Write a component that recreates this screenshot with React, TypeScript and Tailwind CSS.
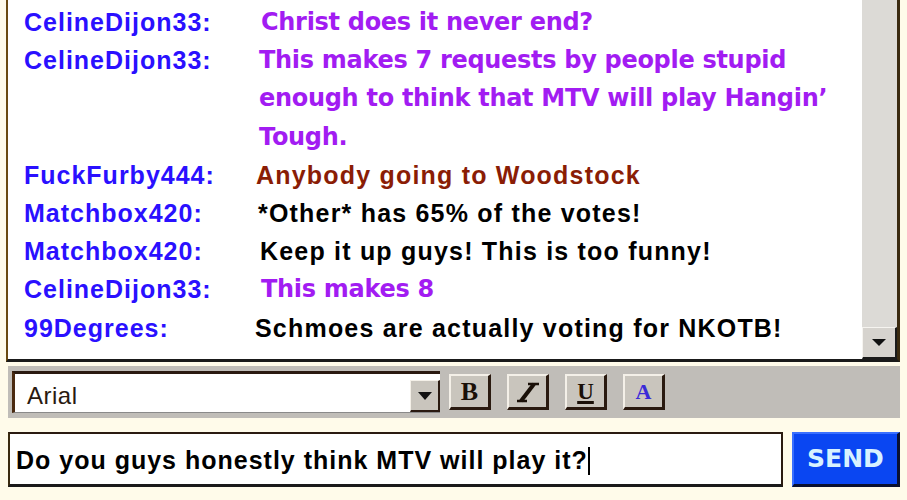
import React from "react";

type Line = { name: string; text: string[]; color: string; comic?: boolean; x: number };

const lines: Line[] = [
  { name: "CelineDijon33:", text: ["Christ does it never end?"], color: "text-[#a21cf2]", comic: true, x: 261 },
  {
    name: "CelineDijon33:",
    text: ["This makes 7 requests by people stupid", "enough to think that MTV will play Hangin’", "Tough."],
    color: "text-[#a21cf2]",
    comic: true,
    x: 259,
  },
  { name: "FuckFurby444:", text: ["Anybody going to Woodstock"], color: "text-[#8a1d05]", x: 256 },
  { name: "Matchbox420:", text: ["*Other* has 65% of the votes!"], color: "text-black", x: 258 },
  { name: "Matchbox420:", text: ["Keep it up guys! This is too funny!"], color: "text-black", x: 260 },
  { name: "CelineDijon33:", text: ["This makes 8"], color: "text-[#a21cf2]", comic: true, x: 261 },
  { name: "99Degrees:", text: ["Schmoes are actually voting for NKOTB!"], color: "text-black", x: 255 },
];

const arial = "font-['Liberation_Sans',Arial,sans-serif]";
const comic = "font-['Comic_Sans_MS','DejaVu_Sans',sans-serif]";

function FmtButton({ children }: { children: React.ReactNode }) {
  return (
    <div className="w-[42px] h-[36px] bg-[#c9c5bd] border-t-2 border-l-2 border-t-[#f4f0e8] border-l-[#f4f0e8] border-b-[3px] border-r-[3px] border-b-[#2a1a10] border-r-[#2a1a10] flex items-center justify-center">
      {children}
    </div>
  );
}

export default function App() {
  return (
    <div className="w-[907px] h-[500px] bg-[#fffbea] flex flex-col overflow-hidden">
      {/* chat window */}
      <div className="h-[362px] ml-[6px] mr-[7px] flex border-l-2 border-b-[3px] border-r-[3px] border-l-[#6b4a10] border-b-[#1a1a1a] border-r-[#3a2a10] bg-white">
        <div className="flex-1 pt-[3px] overflow-hidden">
          {lines.map((l, i) => (
            <div key={i} className="flex">
              <div
                className={`${arial} font-bold text-[#2a10ff] text-[25px] leading-[38.2px] pl-[16px] shrink-0 tracking-[1px]`}
                style={{ width: l.x - 8 }}
              >
                {l.name}
              </div>
              <div
                className={`${l.color} ${
                  l.comic
                    ? comic + " font-bold text-[24px] tracking-[-0.3px]"
                    : arial + " font-bold text-[25px] tracking-[1.2px]"
                } leading-[38.2px]`}
              >
                {l.text.map((t, j) => (
                  <div key={j} className="whitespace-nowrap">
                    {t}
                  </div>
                ))}
              </div>
            </div>
          ))}
        </div>
        <div className="w-[35px] bg-[#dcdad6] flex flex-col justify-end">
          <div className="h-[32px] bg-[#d6d3ce] border-t border-l border-t-[#f6f4f0] border-l-[#f6f4f0] border-b-2 border-r-2 border-b-[#1a1a1a] border-r-[#1a1a1a] flex items-center justify-center">
            <svg width="16" height="9" viewBox="0 0 16 9">
              <path d="M1 1 H15 L8 8 Z" fill="#111" />
            </svg>
          </div>
        </div>
      </div>

      {/* toolbar */}
      <div className="h-[52px] ml-[8px] mr-[7px] mt-[4px] bg-[#c0bdb8] flex items-center pl-[4px] gap-[9px]">
        <div className="w-[428px] h-[42px] bg-white border-t-[3px] border-l-[3px] border-t-[#2a1a10] border-l-[#4a2a10] border-b border-b-[#8a8a8a] flex items-center justify-between">
          <span className={`${arial} text-[24px] text-[#2a1a10] pl-[12px] pt-[6px] tracking-[0.5px]`}>Arial</span>
          <div className="w-[30px] h-[32px] self-end bg-[#c9c5bd] border-t border-l border-t-[#f4f0e8] border-l-[#f4f0e8] border-b-2 border-r-2 border-b-[#2a1a10] border-r-[#2a1a10] flex items-center justify-center">
            <svg width="14" height="8" viewBox="0 0 14 8">
              <path d="M0 0 H14 L7 8 Z" fill="#111" />
            </svg>
          </div>
        </div>
        <div className="flex gap-[16px]">
          <FmtButton>
            <span className="font-['Liberation_Serif',serif] font-bold text-[26px] leading-none text-[#1a1008]">B</span>
          </FmtButton>
          <FmtButton>
            <svg width="24" height="22" viewBox="0 0 24 22">
              <path d="M5 20 L18 3" stroke="#1a1008" strokeWidth="4" />
              <path d="M12 3 H23 M1 20 H11" stroke="#1a1008" strokeWidth="2.5" />
            </svg>
          </FmtButton>
          <FmtButton>
            <span className="font-['Liberation_Serif',serif] font-bold text-[23px] leading-none text-[#1a1008] underline decoration-[3px] underline-offset-[2px]">
              U
            </span>
          </FmtButton>
          <FmtButton>
            <span className="font-['Liberation_Serif',serif] font-bold text-[22px] leading-none text-[#3a2ad8]">A</span>
          </FmtButton>
        </div>
      </div>

      {/* input row */}
      <div className="flex mt-[14px] ml-[8px] mr-[7px] gap-[9px]">
        <div className="w-[775px] h-[55px] bg-white border-t-2 border-l-2 border-b-[3px] border-r-2 border-t-[#2a1a10] border-l-[#3a2a10] border-b-[#1a1a1a] border-r-[#2a1a10] flex items-center pl-[6px]">
          <span className={`${arial} font-bold text-[25px] text-black tracking-[1px] pt-[4px]`}>
            Do you guys honestly think MTV will play it?
          </span>
          <span className="w-[2px] h-[28px] bg-black ml-[0px] mt-[4px]" />
        </div>
        <div className="w-[108px] h-[55px] bg-[#0a46f2] border-t-2 border-l-2 border-t-[#3a70ff] border-l-[#3a70ff] border-b-[3px] border-r-[3px] border-b-[#0a1030] border-r-[#0a1030] flex items-center justify-center">
          <span className="font-['DejaVu_Sans',Verdana,sans-serif] font-bold text-[25px] text-[#d8f2ff]">SEND</span>
        </div>
      </div>
    </div>
  );
}
